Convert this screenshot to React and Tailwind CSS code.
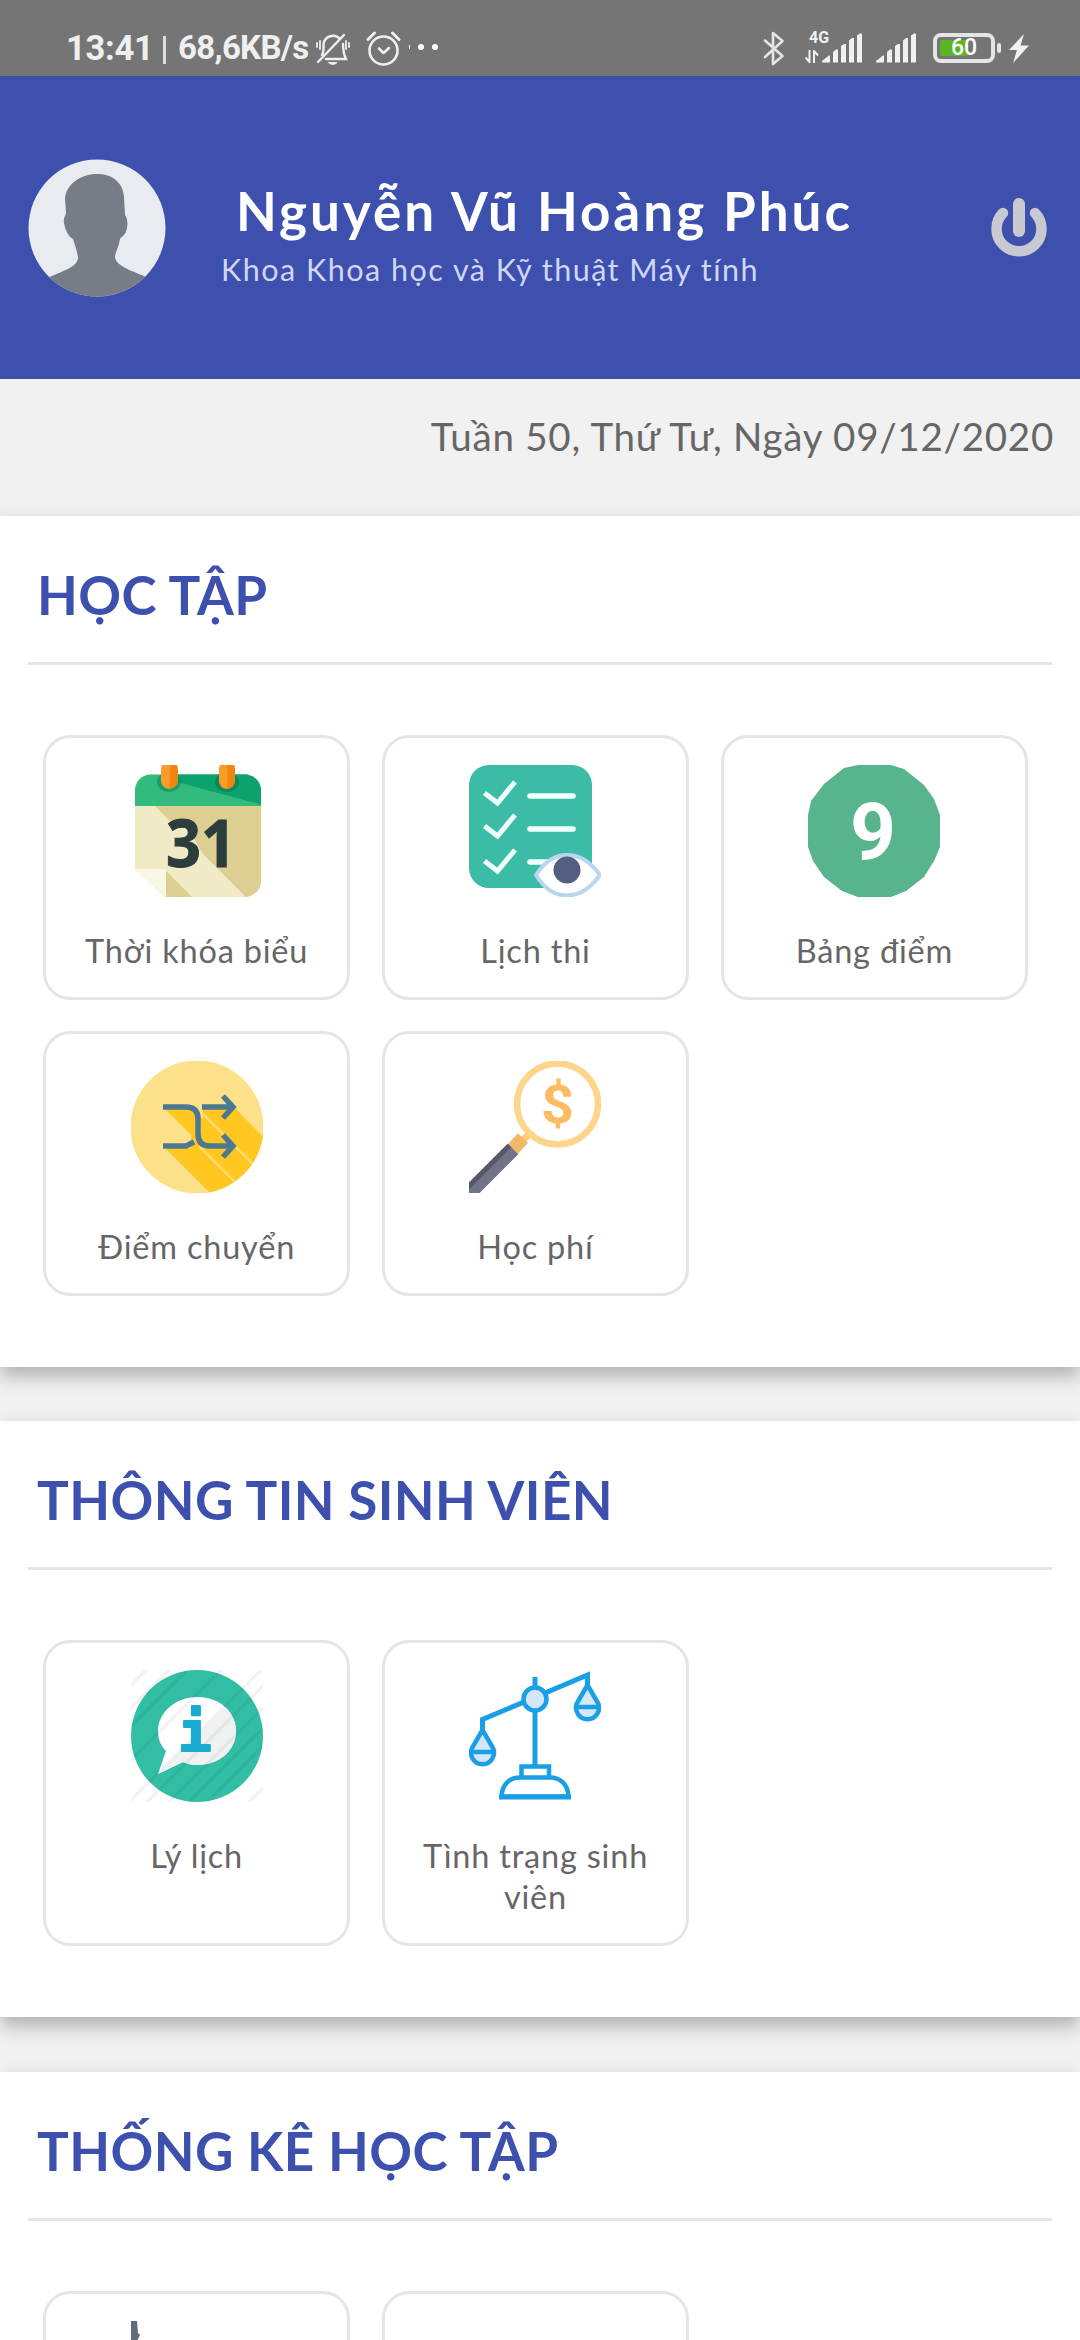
import React from "react";

/* ---------- Status bar icons ---------- */

function BellOff() {
  return (
    <svg width="34" height="34" viewBox="0 0 34 34" fill="none" stroke="#efefef" strokeWidth="2.4" strokeLinecap="round">
      <path d="M6 23C8 20 7.500 15 7.500 12A9.500 9.500 0 0 1 24 7M27 12C27 18 27.500 22 30 27H10" />
      <path d="M2 30L28 3" />
      <path d="M12.500 30.500H21C19 33 14.500 33 12.500 30.500Z" fill="#efefef" strokeWidth="1" />
      <path d="M1 11v4M4 9v8M30 9v8M33 11v4" strokeWidth="1.800" />
    </svg>
  );
}

function Alarm() {
  return (
    <svg width="35" height="35" viewBox="0 0 35 35" fill="none" stroke="#efefef" strokeLinecap="round">
      <circle cx="17.500" cy="19.500" r="14" strokeWidth="2.600" />
      <path d="M13 17.500l4.500 4.500 5.500-5" strokeWidth="2.600" strokeLinejoin="round" />
      <path d="M2 8.500L8.500 2M33 8.500L26.500 2" strokeWidth="3" />
    </svg>
  );
}

function Bluetooth() {
  return (
    <svg width="22" height="35" viewBox="0 0 22 35" fill="none" stroke="#e4e4e4" strokeWidth="2.600" strokeLinecap="round" strokeLinejoin="round">
      <path d="M2 9.500L19.500 25 10 33V2l9.500 8L2 26" />
    </svg>
  );
}

function Signal() {
  return (
    <svg width="41" height="30" viewBox="0 0 41 30" fill="#f1f1f1">
      <path d="M0 29.500V28L7 22.500H8V29.500Z" />
      <path d="M11 29.500V19L14 16.500H16V29.500Z" />
      <path d="M19 29.500V13L22 11H24V29.500Z" />
      <path d="M27 29.500V7.500L30 5H32V29.500Z" />
      <path d="M35 29.500V2.500L38 0.500H40V29.500Z" />
    </svg>
  );
}

function DataArrows() {
  return (
    <svg width="14" height="13" viewBox="0 0 14 13" fill="none" stroke="#f1f1f1" strokeWidth="2">
      <path d="M4.500 0V12L0.500 7.500M9 13V1L13 5.500" />
    </svg>
  );
}

function Bolt() {
  return (
    <svg width="20" height="29" viewBox="0 0 20 29" fill="#f1f1f1">
      <path d="M15 0L0 16H8L4 29L20 11.500H11.500Z" />
    </svg>
  );
}

function StatusBar() {
  return (
    <div className="flex h-[76px] items-start bg-[#757575] pl-[66px] font-[Roboto,sans-serif] text-[#efefef]">
      <div className="flex h-[34px] w-[250px] mt-[31px] items-center">
        <span className="w-[97px] text-[34.500px] leading-[34px] font-bold tracking-[-0.300px]">13:41</span>
        <span className="h-[28px] mt-[3px] w-[3px] bg-[#dcdcdc]" />
        <span className="ml-[12px] text-[33px] leading-[34px] font-bold tracking-[-0.700px]">68,6KB/s</span>
      </div>
      <div className="mt-[32px]"><BellOff /></div>
      <div className="mt-[31px] ml-[16px]"><Alarm /></div>
      <div className="mt-[44px] ml-[8px] flex items-center">
        <span className="h-[4px] w-[1px] bg-white" />
        <span className="ml-[8px] h-[6px] w-[6px] rounded-full bg-white" />
        <span className="ml-[8px] h-[6px] w-[6px] rounded-full bg-white" />
      </div>
      <div className="mt-[31px] ml-[325px]"><Bluetooth /></div>
      <div className="mt-[30px] ml-[20px] h-[33px] w-[17px]">
        <div className="ml-[4px] text-[16px] leading-[16px] font-bold">4G</div>
        <div className="mt-[4px]"><DataArrows /></div>
      </div>
      <div className="mt-[32.500px]"><Signal /></div>
      <div className="mt-[32.500px] ml-[13px]"><Signal /></div>
      <div className="mt-[33px] ml-[16px] flex h-[30px] w-[62px] items-center rounded-[8px] border-[4px] border-[#e4e4e4] pl-[3px]">
        <div className="h-[16px] w-[28px] shrink-0 rounded-[2px] bg-[#5cb524]" />
        <span className="ml-[-17px] text-[23px] leading-[22px] font-medium text-white">60</span>
      </div>
      <div className="mt-[43px] ml-[2px] h-[10px] w-[4px] rounded-[2px] bg-[#e4e4e4]" />
      <div className="mt-[34px] ml-[8px]"><Bolt /></div>
    </div>
  );
}

/* ---------- Header ---------- */

function Avatar() {
  return (
    <svg width="138" height="138" viewBox="0 0 138 138">
      <defs>
        <clipPath id="avatar-clip"><circle cx="69" cy="69" r="68.500" /></clipPath>
      </defs>
      <g clipPath="url(#avatar-clip)">
        <rect width="138" height="138" fill="#e8ebef" />
        <path d="M69 15C84 15 95 23 96 38L97 56C100 60 100 66 98 73C96 77 93 78 92 80C91 87 88 92 87 97C87 105 96 109 116 117L138 125V138H0V125L24 117C40 110 50 107 50 98C49 92 47 86 45 80C41 78 37 71 36 64C35 59 38 56 38 54L37 40C38 25 53 15 69 15Z" fill="#767d86" />
      </g>
    </svg>
  );
}

function Power() {
  return (
    <svg width="56" height="60" viewBox="0 0 56 60" fill="none" stroke="#c9cad1" strokeLinecap="round">
      <path d="M12 15A22.500 22.500 0 1 0 44 15" strokeWidth="10.500" />
      <path d="M28 6V33" strokeWidth="12" />
    </svg>
  );
}

function Header() {
  return (
    <header className="flex h-[303px] items-start bg-[#3d50ae] pl-[28px]">
      <div className="mt-[83px] w-[138px]"><Avatar /></div>
      <div className="ml-[55px] mt-[103px] w-[770px]">
        <div className="ml-[15px] text-[53px] leading-[64px] font-bold tracking-[3px] whitespace-nowrap text-white">Nguyễn Vũ Hoàng Phúc</div>
        <div className="mt-[6px] text-[30.500px] leading-[40px] tracking-[1.500px] whitespace-nowrap text-[#d0d6f6]">Khoa Khoa học và Kỹ thuật Máy tính</div>
      </div>
      <div className="mt-[122px]"><Power /></div>
    </header>
  );
}

/* ---------- Tile icons ---------- */

function CalendarIcon() {
  return (
    <svg width="132" height="132" viewBox="0 0 132 132">
      <defs>
        <linearGradient id="ring"><stop offset="0.450" stopColor="#fb9c2a" /><stop offset="0.600" stopColor="#ee8510" /></linearGradient>
        <clipPath id="cal"><path d="M4 24Q6 11 19 9.500H116Q128 12 130 24V118Q128 129 116 132H34L4 104Z" /></clipPath>
      </defs>
      <g clipPath="url(#cal)">
        <rect width="132" height="132" fill="#f1eac6" />
        <path d="M24 41H132V132H115L72 89L56 62L38 55Z" fill="#dccf91" />
        <path d="M35 106L61 132H35Z" fill="#dccf91" />
        <path d="M4 104H35V132Z" fill="#f9f6e4" />
        <rect y="9" width="132" height="32" fill="#33bb7d" />
        <path d="M46 17L42 9H132V40Z" fill="#0ba26e" />
        <ellipse cx="38" cy="17" rx="12" ry="10" fill="#08915f" opacity="0.700" />
        <ellipse cx="96" cy="17" rx="12" ry="10" fill="#087e53" opacity="0.700" />
      </g>
      <rect x="30" y="-4" width="17" height="28" rx="8.500" fill="url(#ring)" />
      <rect x="88" y="-4" width="16" height="28" rx="8" fill="url(#ring)" />
      <text x="35" y="102" fontFamily="Open Sans, sans-serif" fontWeight="700" fontSize="67" textLength="70" lengthAdjust="spacingAndGlyphs" fill="#2b3d3d" stroke="#2b3d3d" strokeWidth="1">31</text>
    </svg>
  );
}

function ChecklistIcon() {
  return (
    <svg width="132" height="132" viewBox="0 0 132 132" fill="none">
      <rect width="123" height="123" rx="20" fill="#3cbca6" />
      <g stroke="#f1fffc" strokeWidth="5">
        <path d="M15.500 28L28.500 38L46 17" />
        <path d="M15.500 61L28.500 71L46 50" />
        <path d="M15.500 96L28.500 106L46 85" />
        <path d="M61 31H104M61 64H104M61 97H90" strokeLinecap="round" strokeWidth="5.500" />
      </g>
      <path d="M67 110C76 96 86 90 98 90S121 96 131 110C121 124 111 130.500 98 130.500S76 124 67 110Z" fill="#fff" stroke="#b9d6f1" strokeWidth="4" />
      <circle cx="98" cy="105" r="13.500" fill="#555e80" />
    </svg>
  );
}

function GradeIcon() {
  return (
    <svg width="132" height="132" viewBox="0 0 132 132">
      <path d="M50 0H83L96 4L116 20L126 34L132 50V82L126 96L116 112L98 126L83 132H50L34 126L16 112L5 96L0 82V50L3 36L16 19L36 3Z" fill="#57b48d" />
      <text x="42" y="94" fontFamily="Roboto, sans-serif" fontWeight="700" fontSize="80" textLength="46" lengthAdjust="spacingAndGlyphs" fill="#fff">9</text>
    </svg>
  );
}

function ShuffleIcon() {
  return (
    <svg width="132" height="132" viewBox="0 0 132 132" fill="none">
      <defs>
        <clipPath id="shuffle-clip"><circle cx="66" cy="66" r="66.500" /></clipPath>
      </defs>
      <g clipPath="url(#shuffle-clip)">
        <rect width="132" height="132" fill="#fde18a" />
        <path d="M34 48H62L72 58V46H103L142 86V142H89L34 87H60V74Z" fill="#ffc71f" />
        <path d="M72 53L122 103M68 85L106 123" stroke="#fddb6c" strokeWidth="2.500" />
      </g>
      <g stroke="#4c7893" strokeWidth="5.500">
        <path d="M32 46H55Q67 46 67 58V73Q67 85 79 85H101" />
        <path d="M32 85H55L63 81M71 46H101" />
        <path d="M92 35L102 46L92 57M92 74L102 85L92 96" />
      </g>
    </svg>
  );
}

function TuitionIcon() {
  return (
    <svg width="132" height="132" viewBox="0 0 132 132" fill="none">
      <path d="M64 69L50 83" stroke="#ffcc7e" strokeWidth="7" />
      <path d="M54 77L43 89" stroke="#efb969" strokeWidth="14" />
      <path d="M44 88L-4 136" stroke="#717388" strokeWidth="15" />
      <path d="M40.500 84.500L-4 129" stroke="#55586b" strokeWidth="5" />
      <circle cx="88.500" cy="43" r="40.500" stroke="#ffd58b" strokeWidth="6.500" fill="#fff" />
      <text x="72" y="62" fontFamily="Roboto, sans-serif" fontWeight="700" fontSize="54" textLength="33" lengthAdjust="spacingAndGlyphs" fill="#fdbc64">$</text>
    </svg>
  );
}

function InfoIcon() {
  return (
    <svg width="132" height="132" viewBox="0 0 132 132" fill="none">
      <circle cx="66" cy="66" r="66" fill="#32bda5" />
      <path d="M66 27C89 27 105 42 105 61S89 95 66 95C61 95 56 94 52 92L27 104L35 81C29 75 27 68 27 61C27 42 45 27 66 27Z" fill="#fff" />
      <path d="M94 38C101 44 105 52 105 61C105 80 89 95 66 95C61 95 56 94 52 92L27 104Z" fill="#f0f1f1" />
      <path d="M-2 17L17 -2M-2 58L58 -2M-2 92L92 -2M-2 132L132 -2M38 132L132 38M76 132L132 76M-2 40L40 -2M14 134L134 14M56 134L134 56M116 134L134 116" stroke="#000" strokeOpacity="0.050" strokeWidth="3" />
      <text x="47" y="81" fontFamily="DejaVu Sans Mono, monospace" fontWeight="700" fontSize="56" fill="#1babd2" stroke="#1babd2" strokeWidth="2" strokeLinejoin="round">i</text>
    </svg>
  );
}

function ScalesIcon() {
  return (
    <svg width="132" height="132" viewBox="0 0 132 132" fill="none" stroke="#1a9fe6" strokeWidth="4.500">
      <path d="M66 7V96M13.500 60V49.500L118.500 5V18" strokeWidth="5" />
      <circle cx="66" cy="29" r="11.500" fill="#d3e7f9" />
      <path d="M13.500 60L3 78A11.500 11.500 0 1 0 24 78Z" fill="#d3e7f9" />
      <path d="M118.500 15L108 33A11.500 11.500 0 1 0 129 33Z" fill="#d3e7f9" />
      <path d="M2 82H25M107 37H130" />
      <path d="M52.500 108V96.500H80V108" />
      <path d="M32.500 126.500C33 114 41 107.500 51 107.500H81C91 107.500 99 114 99.500 126.500Z" />
      <path d="M30 127H102" strokeWidth="5" />
    </svg>
  );
}

function ChartIcon() {
  return (
    <svg width="132" height="132" viewBox="0 0 132 132">
      <path d="M0 0H6L7 12L9 14L7 18V132H0Z" fill="#626c79" />
    </svg>
  );
}

/* ---------- Sections ---------- */

function Tile({ icon, label }) {
  return (
    <div className="flex min-h-[265px] flex-col items-center rounded-[27px] border-[3px] border-[#e5e5e5] bg-white px-[24px] pt-[27px] pb-[26px]">
      <div className="h-[132px] w-[132px]">{icon}</div>
      {label && (
        <div className="mt-[33px] text-center text-[32.500px] leading-[41px] tracking-[0.800px] text-[#666666]">{label}</div>
      )}
    </div>
  );
}

function Section({ title, children }) {
  return (
    <section className="mb-[54.300px] bg-white px-[28px] pb-[71px] shadow-[0_9px_18px_rgba(0,0,0,0.270)]">
      <h2 className="h-[149px] border-b-[3px] border-[#e5e5e5] pt-[47px] pl-[9px] text-[53px] leading-[64px] font-bold tracking-[0.400px] text-[#3d50ae]">{title}</h2>
      <div className="mt-[70px] ml-[15px] grid w-[985px] grid-cols-3 gap-x-[31.500px] gap-y-[31px]">{children}</div>
    </section>
  );
}

export default function App() {
  return (
    <div className="h-[2340px] w-[1080px] overflow-hidden bg-[#f1f1f1] font-[Lato,sans-serif]">
      <StatusBar />
      <Header />
      <div className="flex h-[137px] justify-end pt-[33px] pr-[26px] text-[38.500px] leading-[48px] tracking-[0.750px] text-[#666666]">
        Tuần 50, Thứ Tư, Ngày 09/12/2020
      </div>
      <Section title="HỌC TẬP">
        <Tile icon={<CalendarIcon />} label="Thời khóa biểu" />
        <Tile icon={<ChecklistIcon />} label="Lịch thi" />
        <Tile icon={<GradeIcon />} label="Bảng điểm" />
        <Tile icon={<ShuffleIcon />} label="Điểm chuyển" />
        <Tile icon={<TuitionIcon />} label="Học phí" />
      </Section>
      <Section title="THÔNG TIN SINH VIÊN">
        <Tile icon={<InfoIcon />} label="Lý lịch" />
        <Tile icon={<ScalesIcon />} label="Tình trạng sinh viên" />
      </Section>
      <Section title="THỐNG KÊ HỌC TẬP">
        <Tile icon={<ChartIcon />} />
        <Tile />
      </Section>
    </div>
  );
}
